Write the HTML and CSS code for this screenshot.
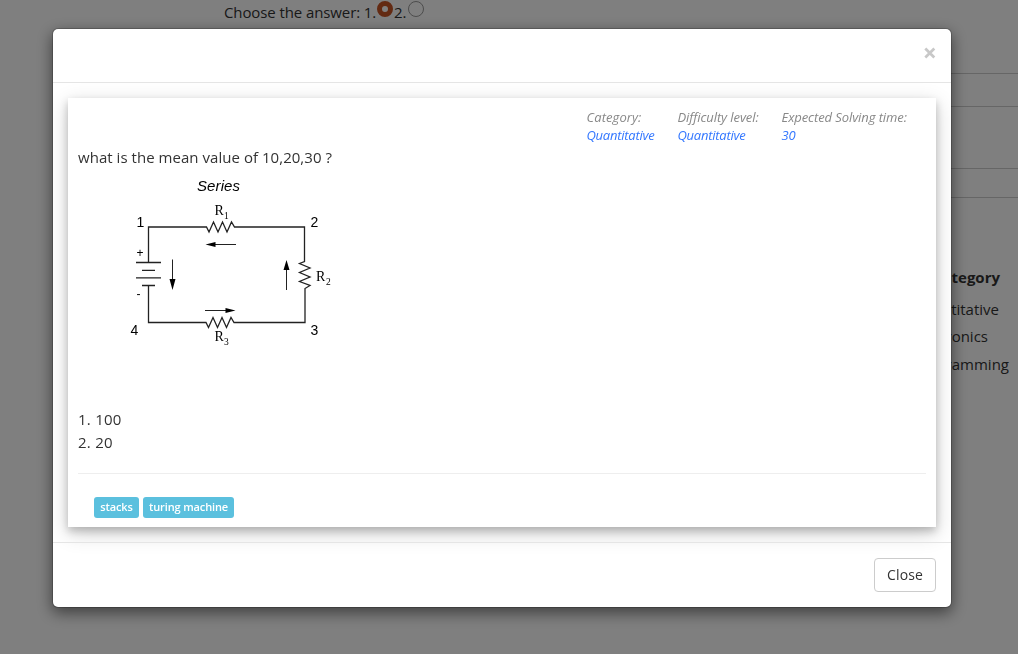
FILE: index.html
```html
<!DOCTYPE html>
<html lang="en">
<head>
<meta charset="utf-8">
<title>Question preview</title>
<link rel="stylesheet" href="styles.css">
</head>
<body>
<div class="page">
  <div class="answer-row"><span class="prompt">Choose the answer: 1.</span><span class="radio checked"></span><span>2.</span><span class="radio"></span></div>
  <div class="rows"><div class="row first"></div><div class="row second"></div></div>
  <div class="categories"><b>Category</b><span>Quantitative</span><span>Electronics</span><span>Programming</span></div>
</div>
<div class="backdrop">
  <div class="modal">
    <div class="modal-header"><svg class="dismiss" width="12" height="12" viewBox="0 0 12 12"><path d="M1.300 1.500L10.300 10.500M10.300 1.500L1.300 10.500"/></svg></div>
    <div class="modal-body">
      <div class="card">
        <div class="meta">
          <div class="meta-item category"><span>Category:</span><em>Quantitative</em></div>
          <div class="meta-item level"><span>Difficulty level:</span><em>Quantitative</em></div>
          <div class="meta-item time"><span>Expected Solving time:</span><em>30</em></div>
        </div>
        <p class="question">what is the mean value of 10,20,30 ?</p>
        <svg class="circuit" width="262" height="182" viewBox="78 170 262 182">
          <g class="wire">
            <path d="M148.500 262V227H206.500l2.500 5 4.500-10 4.500 10 4.500-10 4.500 10 4.500-10 3 5H304.500V261.500l-5 2 10.500 4.500-10.500 4.500 10.500 4.500-10.500 4.500 10.500 4-5 3V322.500H234l-3-5-4.500 10-4.500-10-4.500 10-4.500-10-4.500 10-2.500-5H148.500V285.500"/>
            <path d="M136 262.500H161M142 270.300H155M136 277.800H161M142 285.500H155"/>
            <path class="thin" d="M215 244.500H236M205 310.500H226M172.500 259.500V280M286.500 290V269"/>
          </g>
          <path d="M205.500 244.500l10-2.500v5zM235.500 310.500l-10-2.500v5zM172.500 290l-3-11h6zM286.500 260l-3 10h6z"/>
          <g class="sans">
            <text x="197" y="191" class="title" textLength="43">Series</text>
            <text x="136.500" y="227">1</text><text x="310.500" y="227">2</text>
            <text x="310.500" y="335">3</text><text x="130.500" y="335">4</text>
            <text x="136.500" y="257" class="sign">+</text><text x="136.500" y="298" class="sign">-</text>
          </g>
          <g class="serif">
            <text x="214.500" y="215">R</text><text x="224" y="218.500" class="sub">1</text>
            <text x="316" y="281">R</text><text x="326" y="284.500" class="sub">2</text>
            <text x="214.500" y="341">R</text><text x="224" y="345" class="sub">3</text>
          </g>
        </svg>
        <div class="choices"><div>1. 100</div><div>2. 20</div></div>
        <hr>
        <div class="tags"><span class="tag stacks">stacks</span><span class="tag turing">turing machine</span></div>
      </div>
    </div>
    <div class="modal-footer"><button class="close-button">Close</button></div>
  </div>
</div>
</body>
</html>
```
FILE: styles.css
```css
* { box-sizing: border-box; }
body { margin: 0; height: 654px; overflow: hidden; background: #fff; color: #333; font: 15px/23px "Open Sans", sans-serif; }
.page { height: 654px; }
.answer-row { display: flex; height: 73px; padding: 1px 0 0 224px; }
.prompt { width: 152px; white-space: nowrap; letter-spacing: -.1px; }
.radio { width: 16px; height: 16px; border: 1px solid #999; border-radius: 50%; margin: 0 1px; }
.radio.checked { border: 5px solid #c75425; background: #fff; }
.rows { margin-left: 900px; }
.row { border-top: 1px solid #ccc; border-bottom: 1px solid #ccc; }
.row.first { height: 34px; }
.row.second { height: 30px; margin-top: 61px; }
.categories { display: flex; flex-direction: column; padding: 65px 0 0 908px; }
.categories b { width: 92px; line-height: 28px; text-align: right; margin-bottom: 4px; }
.categories span { height: 27.500px; line-height: 28px; width: 101px; text-align: right; }
.categories span:nth-of-type(1) { width: 91px; }
.categories span:nth-of-type(2) { width: 80px; margin-top: -.5px; }
.backdrop { position: fixed; inset: 0; background: rgba(0,0,0,.5); padding: 28px 0 0 52px; }
.modal { width: 900px; height: 580px; display: flex; flex-direction: column; background: #fff; background-clip: padding-box; border: 1px solid rgba(0,0,0,.2); border-radius: 6px; box-shadow: 0 5px 15px rgba(0,0,0,.5); }
.modal-header { height: 54px; border-bottom: 1px solid #e5e5e5; display: flex; justify-content: flex-end; padding: 18px 15px; }
.dismiss { stroke: #c8c8c8; stroke-width: 2.700; }
.modal-body { height: 459px; padding: 15px; }
.card { height: 429px; padding: 10px 10px 0; background: #fff; box-shadow: 0 4px 8px rgba(0,0,0,.2), 0 6px 20px rgba(0,0,0,.19); }
.meta { display: flex; height: 38px; padding-left: 508.500px; font-size: 13px; line-height: 18px; font-style: italic; color: #888; }
.meta-item { display: flex; flex-direction: column; white-space: nowrap; letter-spacing: -.08px; }
.meta-item.category { width: 91px; }
.meta-item.level { width: 104px; }
.meta-item.category span { letter-spacing: .08px; }
.meta-item em { color: #3377ff; letter-spacing: -.25px; }
.question { margin: 0; height: 24px; letter-spacing: .04px; }
.circuit { display: block; }
.wire { fill: none; stroke: #222; stroke-width: 1.300; }
.thin { stroke-width: 1; }
.sans { font: 14px "Liberation Sans", sans-serif; }
.title { font-size: 15px; font-style: italic; }
.sign { font-size: 12px; }
.serif { font: 14px "Liberation Serif", serif; }
.sub { font-size: 9.500px; }
.choices { height: 121px; padding-top: 56px; letter-spacing: .25px; }
hr { border: 0; border-top: 1px solid #eee; margin: 0; }
.tags { display: flex; gap: 4px; padding: 23px 0 0 16px; }
.tag { height: 21px; border-radius: 3px; background: #5bc0de; color: #fff; font-size: 11px; font-weight: 600; line-height: 20px; text-align: center; white-space: nowrap; letter-spacing: -.13px; }
.tag.stacks { width: 45px; }
.tag.turing { width: 91px; }
.modal-footer { height: 65px; border-top: 1px solid #e5e5e5; padding: 15px; display: flex; justify-content: flex-end; }
.close-button { width: 62px; height: 34px; padding: 0 0 2px; border: 1px solid #ccc; border-radius: 4px; background: #fff; color: #333; font: 14px "Open Sans", sans-serif; letter-spacing: .1px; }
```
